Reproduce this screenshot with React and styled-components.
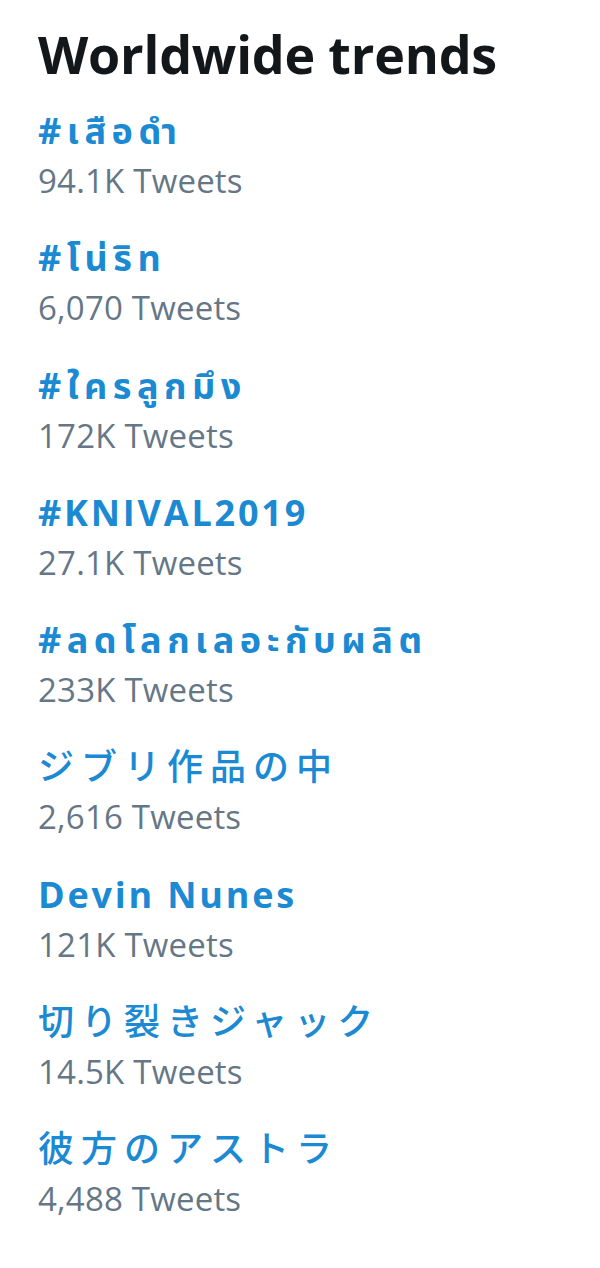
import styled, { createGlobalStyle } from "styled-components";

const GlobalStyle = createGlobalStyle`
  html, body {
    margin: 0;
    padding: 0;
    background: #ffffff;
  }
  body {
    font-family: "Open Sans", "Noto Sans", "Noto Sans Thai", "Noto Sans CJK JP", sans-serif;
  }
`;

const Panel = styled.div`
  width: 600px;
  min-height: 1268px;
  box-sizing: border-box;
  padding: 24px 0 0 38px;
  background: #ffffff;
`;

const Title = styled.h2`
  margin: 0 0 21px;
  font-size: 52px;
  font-weight: 700;
  line-height: 60px;
  color: #14171a;
  letter-spacing: -0.2px;
`;

const List = styled.div`
  display: flex;
  flex-direction: column;
  gap: 27.25px;
`;

const Trend = styled.div`
  display: flex;
  flex-direction: column;
`;

// the trend names render wider than the base font, per script
const spacing = { latin: "2.8px", thai: "5.5px", cjk: "7px" };

const Name = styled.div`
  font-size: 36px;
  font-weight: ${(p) => (p.$script === "cjk" ? 500 : 700)};
  line-height: 52px;
  letter-spacing: ${(p) => spacing[p.$script]};
  color: #1b8ad3;
  white-space: nowrap;
`;

const Count = styled.div`
  font-size: 33px;
  font-weight: 400;
  line-height: 48px;
  letter-spacing: 0.2px;
  color: #657786;
`;

const trends = [
  { name: "#เสือดำ", count: "94.1K Tweets", script: "thai" },
  { name: "#โน่ริท", count: "6,070 Tweets", script: "thai" },
  { name: "#ใครลูกมึง", count: "172K Tweets", script: "thai" },
  { name: "#KNIVAL2019", count: "27.1K Tweets", script: "latin" },
  { name: "#ลดโลกเลอะกับผลิต", count: "233K Tweets", script: "thai" },
  { name: "ジブリ作品の中", count: "2,616 Tweets", script: "cjk" },
  { name: "Devin Nunes", count: "121K Tweets", script: "latin" },
  { name: "切り裂きジャック", count: "14.5K Tweets", script: "cjk" },
  { name: "彼方のアストラ", count: "4,488 Tweets", script: "cjk" },
];

export default function App() {
  return (
    <>
      <GlobalStyle />
      <Panel>
        <Title>Worldwide trends</Title>
        <List>
          {trends.map((t) => (
            <Trend key={t.name}>
              <Name $script={t.script}>{t.name}</Name>
              <Count>{t.count}</Count>
            </Trend>
          ))}
        </List>
      </Panel>
    </>
  );
}
